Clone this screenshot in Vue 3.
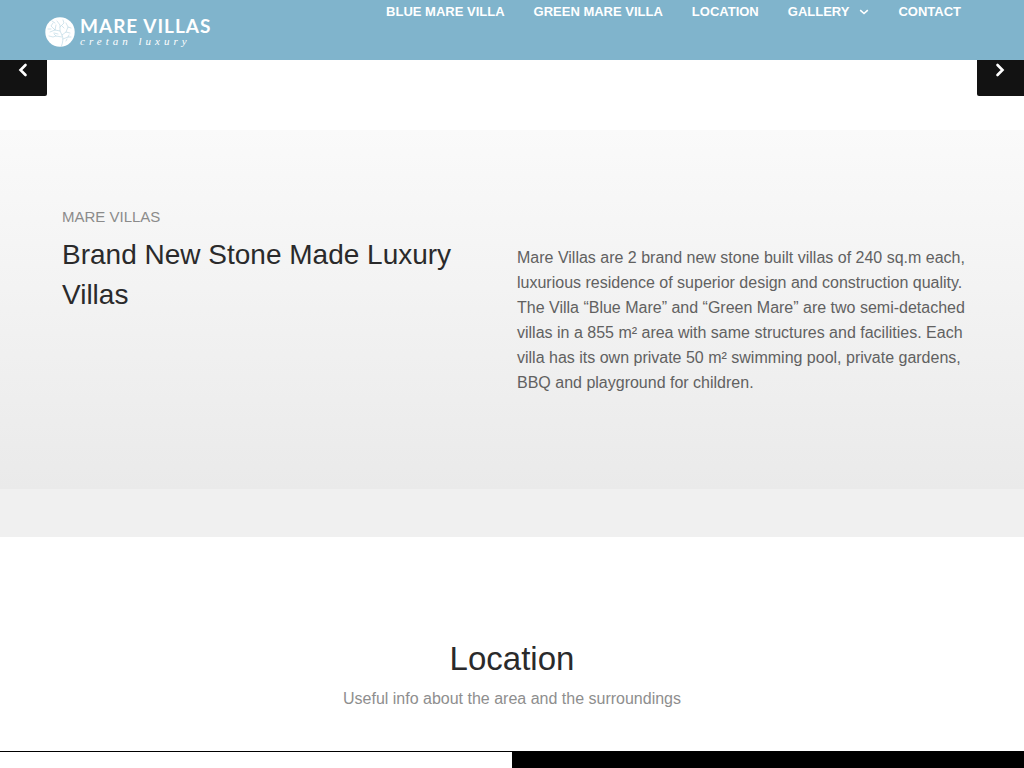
<script setup>
const before = [
  { label: 'Blue Mare Villa', href: '#blue' },
  { label: 'Green Mare Villa', href: '#green' },
  { label: 'Location', href: '#location' },
]
</script>

<template>
  <div class="page">
    <header class="header">
      <a class="logo" href="#top">
        <svg class="emblem" viewBox="0 0 30 30" aria-hidden="true">
          <circle cx="15" cy="15" r="14.7" fill="#fff" />
          <g fill="none" stroke="#b4d3e1" stroke-width=".6" stroke-linecap="round">
            <path d="M16.5 29C18 25 18.500 21 17 18L15 14V8L12 4M15 10L19 6L18 3M17 18L21 15L25 16M21 15L23 10L26 11M23 10L21 6M15 14L10 13L6 9L8 6M10 13L5 15M10 13L11 8M17 20L11 19L8 20L4 19M11 19L9 17M18 22L23 20L26 20M23 20L24 18" />
            <path d="M3 12L6 12M7 4L10 6M19 11L17 9M13 17L9 16M21 24L22 22" />
          </g>
        </svg>
        <span class="wordmark">
          <span class="brand">MARE VILLAS</span>
          <span class="tagline">cretan luxury</span>
        </span>
      </a>
      <nav class="nav" aria-label="Main">
        <a v-for="item in before" :key="item.href" :href="item.href">{{ item.label }}</a>
        <a class="with-menu" href="#gallery">Gallery
          <svg viewBox="0 0 10 6" width="10" height="6" aria-hidden="true">
            <path d="M1.200 1.200L5 4.500L8.800 1.200" fill="none" stroke="currentColor" stroke-width="1.600" />
          </svg>
        </a>
        <a href="#contact">Contact</a>
      </nav>
    </header>

    <main>
      <section class="slider" aria-label="Slides">
        <button class="arrow prev" type="button" aria-label="Previous slide">
          <svg viewBox="0 0 10 14" width="10" height="14" aria-hidden="true">
            <path d="M7.500 2L2.500 7L7.500 12" fill="none" stroke="#fff" stroke-width="2.600" stroke-linecap="round" />
          </svg>
        </button>
        <button class="arrow next" type="button" aria-label="Next slide">
          <svg viewBox="0 0 10 14" width="10" height="14" aria-hidden="true">
            <path d="M2.500 2L7.500 7L2.500 12" fill="none" stroke="#fff" stroke-width="2.600" stroke-linecap="round" />
          </svg>
        </button>
      </section>

      <section class="intro">
        <div class="intro-inner">
          <div class="heading">
            <p class="eyebrow">MARE VILLAS</p>
            <h1>Brand New Stone Made Luxury Villas</h1>
          </div>
          <p class="copy">
            Mare Villas are 2 brand new stone built villas of 240 sq.m each, luxurious residence of
            superior design and construction quality. The Villa “Blue Mare” and “Green Mare” are two
            semi-detached villas in a 855 m² area with same structures and facilities. Each villa has
            its own private 50 m² swimming pool, private gardens, BBQ and playground for children.
          </p>
        </div>
      </section>
      <div class="band"></div>

      <section id="location" class="location">
        <h2>Location</h2>
        <p>Useful info about the area and the surroundings</p>
      </section>
      <div class="map">
        <div class="map-info"></div>
        <div class="map-view"></div>
      </div>
    </main>
  </div>
</template>

<style>
body {
  margin: 0;
  background: #fff;
  overflow: hidden;
}
</style>

<style scoped>
.page {
  height: 100vh;
  overflow: hidden;
  font-family: "Liberation Sans", Arial, sans-serif;
  color: #2a2a2b;
}
h1,
h2,
p {
  margin: 0;
  font-weight: 400;
}
.header {
  display: flex;
  justify-content: space-between;
  align-items: flex-start;
  height: 60px;
  padding: 0 63px 0 45px;
  box-sizing: border-box;
  background: #80b4cc;
}
.header a {
  color: #fff;
  text-decoration: none;
}
.logo {
  display: flex;
  align-items: center;
  gap: 5px;
  padding-top: 17px;
}
.emblem {
  width: 30px;
  height: 30px;
}
.wordmark {
  display: flex;
  flex-direction: column;
  white-space: nowrap;
}
.brand {
  font: 700 19px/18px Lato, sans-serif;
  letter-spacing: 1px;
}
.tagline {
  font: italic 400 11px/12px "Liberation Serif", serif;
  letter-spacing: 4px;
}
.nav {
  display: flex;
  gap: 29px;
  padding-top: 4px;
  font-size: 13px;
  font-weight: 700;
  line-height: 16px;
  text-transform: uppercase;
  white-space: nowrap;
}
.with-menu {
  display: flex;
  align-items: center;
  gap: 10px;
}
.slider {
  display: flex;
  justify-content: space-between;
  align-items: flex-start;
  height: 70px;
}
.arrow {
  display: flex;
  justify-content: center;
  width: 47px;
  height: 36px;
  padding: 3px 2px 0 0;
  border: 0;
  background: #121212;
}
.prev {
  border-radius: 0 0 2px 0;
}
.next {
  border-radius: 0 0 0 2px;
}
.intro {
  padding: 76px 57px 0 62px;
  min-height: 359px;
  box-sizing: border-box;
  background: linear-gradient(#fafafa, #eaeaea);
}
.intro-inner {
  display: grid;
  grid-template-columns: 1fr 1fr;
  gap: 5px;
}
.eyebrow {
  font-size: 15px;
  line-height: 22px;
  color: #8b8b8b;
}
h1 {
  margin-top: 7px;
  font-size: 28px;
  line-height: 40px;
}
.copy {
  padding-top: 39px;
  font-size: 16px;
  line-height: 25px;
  color: #616161;
}
.band {
  height: 48px;
  background: #f0f0f0;
}
.location {
  padding: 102px 0 40px;
  text-align: center;
}
h2 {
  font-size: 33px;
  line-height: 40px;
}
.location p {
  margin-top: 7px;
  font-size: 16px;
  line-height: 25px;
  color: #8e8e8e;
}
.map {
  display: grid;
  grid-template-columns: 1fr 1fr;
  min-height: 240px;
  border-top: 1px solid #000;
}
.map-view {
  background: #000;
}
</style>
